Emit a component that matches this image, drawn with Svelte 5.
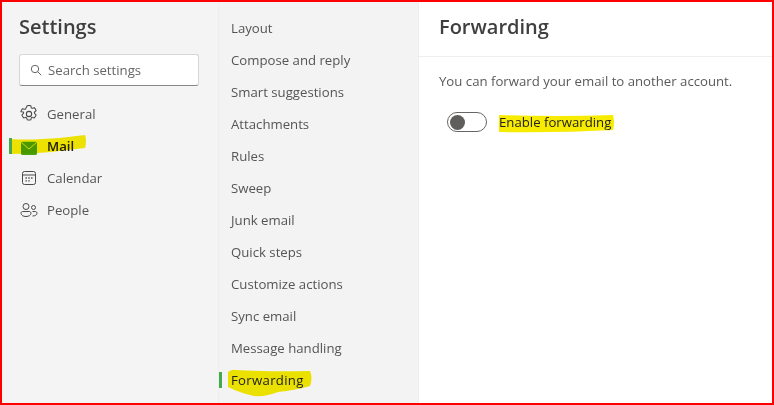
<script>
    const nav_items = [
        { name: 'General', icon: 'gear' },
        { name: 'Mail', icon: 'mail', active: true },
        { name: 'Calendar', icon: 'calendar' },
        { name: 'People', icon: 'people' }
    ];

    const sub_items = [
        'Layout',
        'Compose and reply',
        'Smart suggestions',
        'Attachments',
        'Rules',
        'Sweep',
        'Junk email',
        'Quick steps',
        'Customize actions',
        'Sync email',
        'Message handling',
        'Forwarding'
    ];
</script>

<div class="frame">
    <aside class="nav">
        <h1>Settings</h1>
        <div class="search">
            <svg width="12" height="12" viewBox="0 0 12 12" fill="none" stroke="#666" stroke-width="1">
                <circle cx="5" cy="5" r="3.700" />
                <path d="M7.700 7.700l3.500 3.500" />
            </svg>
            <span>Search settings</span>
        </div>
        <ul class="nav-list">
            {#each nav_items as item}
                <li class:active={item.active}>
                    {#if item.active}<i class="marker"></i>{/if}
                    {#if item.icon === 'gear'}
                        <svg width="18" height="18" viewBox="0.500 0.500 17 17" fill="none" stroke="#4a4a4a" stroke-width="1" stroke-linejoin="round">
                            <circle cx="9" cy="9" r="2.500" />
                            <path d="M7.300 1.200c1.100-.3 2.300-.3 3.400 0l.4 1.700c.1.500.7.800 1.200.6l1.700-.5c.8.800 1.400 1.800 1.700 2.900l-1.300 1.200c-.4.400-.4 1.100 0 1.500l1.300 1.200c-.3 1.100-.9 2.100-1.700 2.900l-1.700-.5c-.5-.2-1.100.1-1.200.6l-.4 1.700c-1.100.3-2.300.3-3.400 0l-.4-1.700c-.1-.5-.7-.8-1.200-.6l-1.700.5c-.8-.8-1.400-1.800-1.700-2.900l1.300-1.200c.4-.4.4-1.100 0-1.500L1.300 6.900c.3-1.100.9-2.100 1.700-2.900l1.700.5c.5.200 1.100-.1 1.200-.6z" />
                        </svg>
                    {:else if item.icon === 'mail'}
                        <svg class="mail-icon" width="18" height="18" viewBox="0 0 18 18">
                            <rect x="1" y="4.700" width="16" height="13.300" rx="1.500" fill="#4aa506" />
                            <path d="M1.500 5.500L9 12l7.500-6.500" fill="none" stroke="#dfe86a" stroke-width="1" />
                        </svg>
                    {:else if item.icon === 'calendar'}
                        <svg width="18" height="18" viewBox="0 0 18 18" fill="none" stroke="#4a4a4a" stroke-width="1">
                            <rect x="2.500" y="2.500" width="13" height="13" rx="2" />
                            <path d="M2.500 6h13" />
                            <path d="M5.500 9h1.400M8.300 9h1.400M11.100 9h1.400M5.500 11.800h1.400M8.300 11.800h1.400" stroke-width="1.300" />
                        </svg>
                    {:else}
                        <svg width="18" height="18" viewBox="0 0 18 18" fill="none" stroke="#4a4a4a" stroke-width="1">
                            <circle cx="6" cy="5.500" r="3" />
                            <circle cx="13.500" cy="6.500" r="2" />
                            <path d="M1 12.200c0-1 .7-1.700 1.700-1.700h6.600c1 0 1.700.7 1.700 1.700 0 2-2.200 3.300-5 3.300s-5-1.300-5-3.300z" />
                            <path d="M12.500 15c2.600 0 4.500-1 4.500-2.800 0-.9-.6-1.700-1.600-1.700h-2.900" />
                        </svg>
                    {/if}
                    <span>{item.name}</span>
                </li>
            {/each}
        </ul>
    </aside>

    <nav class="sub">
        {#each sub_items as item}
            <div class="sub-item">
                {#if item === 'Forwarding'}<i class="marker"></i>{/if}
                <span class:current={item === 'Forwarding'}>{item}</span>
            </div>
        {/each}
    </nav>

    <main class="content">
        <header><h2>Forwarding</h2></header>
        <div class="body">
            <p>You can forward your email to another account.</p>
            <div class="toggle-row">
                <span class="toggle"><i></i></span>
                <span class="toggle-label">Enable forwarding</span>
            </div>
        </div>
    </main>

    <svg class="scribble" width="774" height="405" viewBox="0 0 774 405">
        <g fill="#f7ec00">
            <path d="M10 139q18 1 32 0q22 -1 43 -4q2 6 0 13q-18 2 -34 4q-20 2 -41 2z" />
            <path d="M228 372q4 -3 8 -2q36 2 74 1q3 7 0 15q-14 4 -32 6q-12 5 -24 4q-14 -3 -26 -9z" />
            <path d="M499 115q58 2 114 0q2 8 0 15q-56 3 -114 2z" />
        </g>
    </svg>
</div>

<style>
    :global(body) {
        margin: 0;
    }

    .frame {
        position: relative;
        box-sizing: border-box;
        width: 774px;
        height: 405px;
        border: 2px solid #f00;
        display: flex;
        overflow: hidden;
        background: #fff;
        font-family: "Open Sans", "Noto Sans", sans-serif;
        color: #424242;
    }

    .nav {
        width: 217px;
        flex: none;
        box-sizing: border-box;
        padding: 0 19px 0 17px;
        background: #f4f4f4;
        border-right: 1px solid #eee;
    }

    h1 {
        margin: 9px 0 0;
        font-size: 20px;
        line-height: 32px;
        font-weight: 600;
        color: #3f3f3f;
    }

    .search {
        box-sizing: border-box;
        height: 32px;
        margin-top: 11px;
        display: flex;
        align-items: center;
        gap: 6px;
        padding-left: 10px;
        background: #fff;
        border: 1px solid #d6d6d6;
        border-bottom-color: #888;
        border-radius: 3px;
        font-size: 13.200px;
        color: #666;
    }

    .nav-list {
        list-style: none;
        margin: 12px 0 0;
        padding: 0;
    }

    .nav-list li {
        position: relative;
        height: 32px;
        display: flex;
        align-items: center;
        gap: 9px;
        padding-left: 1px;
        font-size: 13.200px;
        color: #555;
    }

    .nav-list li.active {
        color: #222;
        font-weight: 600;
    }

    .mail-icon {
        overflow: visible;
    }

    .marker {
        position: absolute;
        left: -10px;
        top: 8px;
        width: 3px;
        height: 16px;
        background: #46a84f;
        z-index: 2;
    }

    .sub {
        width: 200px;
        flex: none;
        box-sizing: border-box;
        padding-top: 10px;
        background: #f3f3f3;
        border-right: 1px solid #eee;
    }

    .sub-item {
        position: relative;
        height: 32px;
        display: flex;
        align-items: center;
        padding-left: 12px;
        font-size: 13.200px;
        color: #555;
    }

    .sub-item .marker {
        left: 0;
        top: 8px;
        height: 16px;
    }

    .sub-item .current {
        color: #222;
        letter-spacing: 0.300px;
        position: relative;
        z-index: 2;
    }

    .content {
        flex: 1;
    }

    header {
        height: 55px;
        box-sizing: border-box;
        padding: 9px 20px 0;
        border-bottom: 1px solid #eee;
    }

    h2 {
        margin: 0;
        font-size: 20px;
        line-height: 32px;
        font-weight: 600;
        color: #3f3f3f;
    }

    .body {
        padding: 0 20px;
    }

    p {
        margin: 14px 0 0;
        font-size: 13.200px;
        line-height: 20px;
        color: #5a5a5a;
    }

    .toggle-row {
        margin-top: 21px;
        margin-left: 8px;
        display: flex;
        align-items: center;
        gap: 12px;
    }

    .toggle {
        box-sizing: border-box;
        width: 40px;
        height: 20px;
        border: 1px solid #666;
        border-radius: 10px;
        display: flex;
        align-items: center;
        padding-left: 2px;
        background: #fff;
    }

    .toggle i {
        width: 15px;
        height: 15px;
        border-radius: 50%;
        background: #605e5c;
    }

    .toggle-label {
        position: relative;
        z-index: 2;
        font-size: 13.200px;
        color: #222;
    }

    .scribble {
        position: absolute;
        left: -2px;
        top: -2px;
        mix-blend-mode: multiply;
        pointer-events: none;
    }
</style>
